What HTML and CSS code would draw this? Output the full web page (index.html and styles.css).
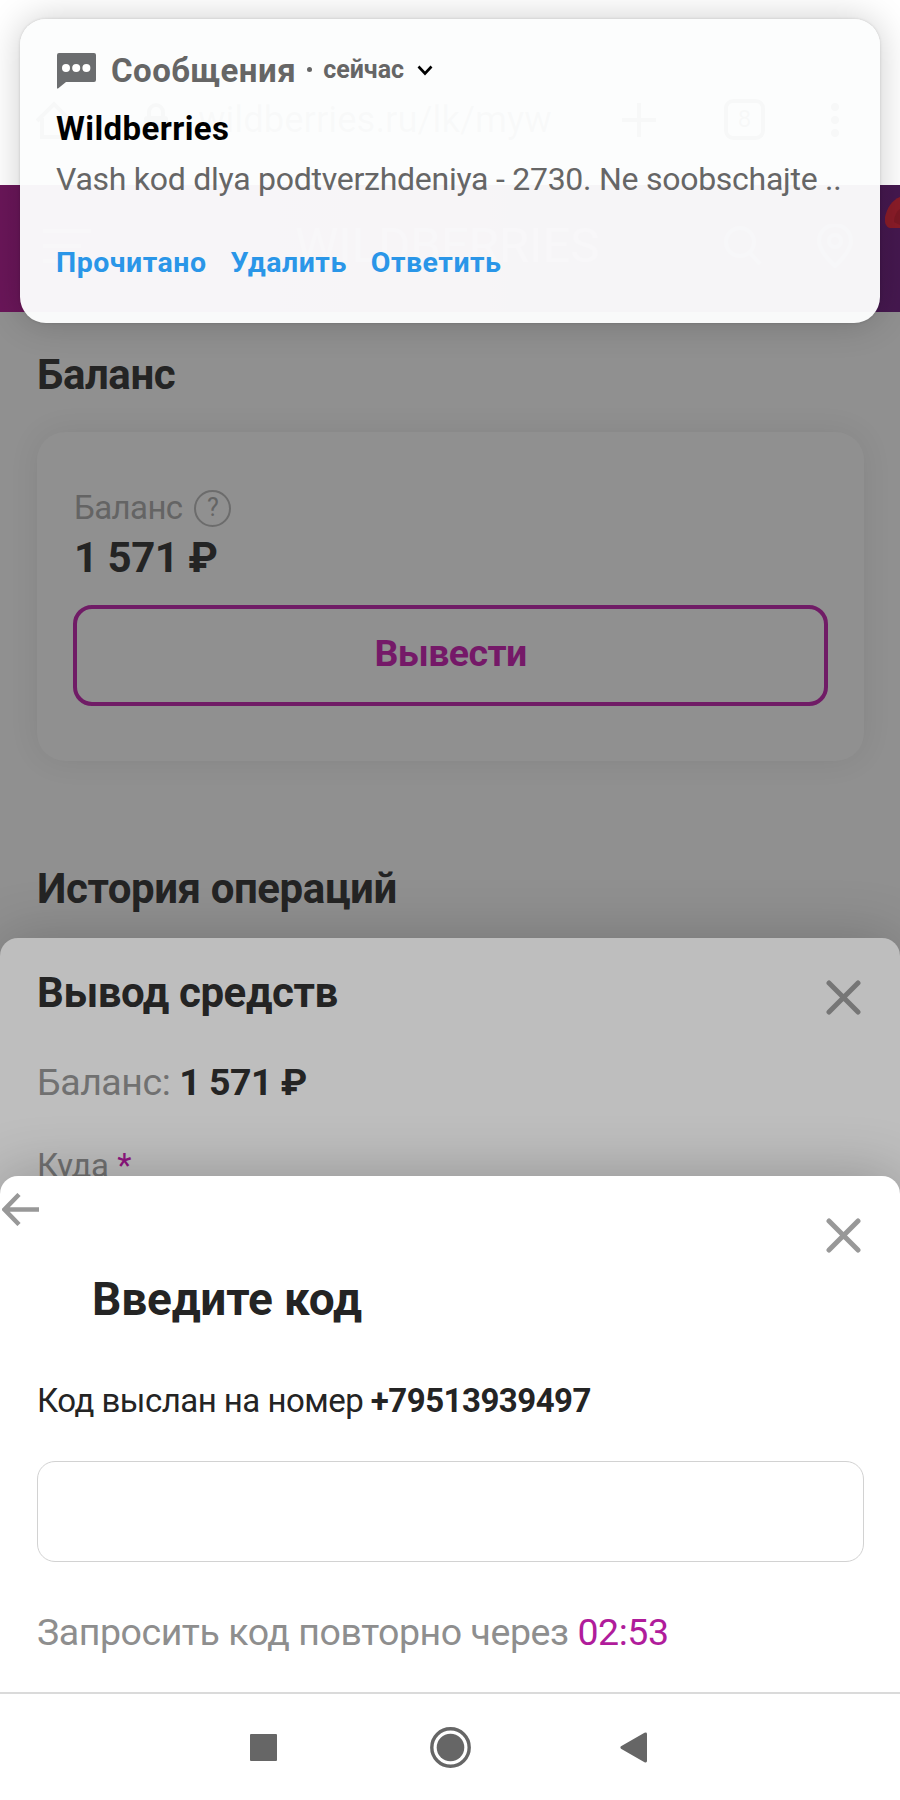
FILE: index.html
```html
<!DOCTYPE html>
<html lang="ru">
<head>
    <meta charset="UTF-8">
    <meta name="viewport" content="width=device-width, initial-scale=1.0">
    <title>Вывод средств</title>
    <link rel="stylesheet" href="styles.css">
</head>
<body>
    <div class="screen">
        <div class="browser-bar">
            <svg class="icon" width="40" height="40" viewBox="0 0 40 40"><path d="M3 21L20 4l17 17M8 18v19h24V18"/></svg>
            <svg class="lock" width="26" height="34" viewBox="0 0 26 34"><path d="M6 14V9a7 7 0 0 1 14 0v5" fill="none" stroke="#666" stroke-width="4"/><rect x="1" y="13" width="24" height="19" rx="3" fill="#666"/></svg>
            <span class="url">wildberries.ru/lk/myw</span>
            <svg class="icon plus" width="36" height="36" viewBox="0 0 36 36"><path d="M18 1v34M1 18h34"/></svg>
            <span class="tabs">8</span>
            <svg class="dots" width="12" height="36" viewBox="0 0 12 36"><circle cx="6" cy="5" r="4"/><circle cx="6" cy="18" r="4"/><circle cx="6" cy="31" r="4"/></svg>
        </div>

        <div class="shop-header">
            <svg class="icon light" width="48" height="36" viewBox="0 0 48 36"><path d="M0 3h48M0 18h38M0 33h48"/></svg>
            <span class="logo">WILDBERRIES</span>
            <svg class="icon light" width="38" height="40" viewBox="0 0 38 40"><circle cx="16" cy="16" r="14"/><path d="M26 27l10 11"/></svg>
            <svg class="icon light" width="38" height="44" viewBox="0 0 38 44"><path d="M19 42S3 28 3 17a16 16 0 0 1 32 0c0 11-16 25-16 25z"/><circle cx="19" cy="17" r="6"/></svg>
            <svg class="berry" width="15" height="32" viewBox="0 0 15 32"><path d="M15 0C7 3 2 11 0 20c-1 7 2 11 6 11h9z" fill="#8a1c28"/><path d="M15 12c-4 3-6 8-6 13l6 3z" fill="#7c1824"/></svg>
        </div>

        <div class="page">
            <h2>Баланс</h2>
            <div class="card">
                <div class="label">
                    <span>Баланс</span>
                    <span class="help">?</span>
                </div>
                <div class="amount">1 571 ₽</div>
                <button class="withdraw">Вывести</button>
            </div>
            <h2 class="history">История операций</h2>
        </div>

        <!-- Вывод средств -->
        <div class="sheet sheet-withdraw">
            <div class="sheet-head">
                <h2>Вывод средств</h2>
                <svg class="close" width="35" height="35" viewBox="0 0 35 35"><path d="M3 3l29 29M32 3L3 32"/></svg>
            </div>
            <p class="balance">Баланс: <b>1 571 ₽</b></p>
            <p class="where">Куда <span>*</span></p>
        </div>

        <!-- Код из SMS -->
        <div class="sheet sheet-code">
            <div class="code-head">
                <svg class="back" width="38" height="33" viewBox="0 0 38 33"><path d="M17 1.5L2.5 16.5 17 31.5M3 16.5h34"/></svg>
                <svg class="close" width="35" height="35" viewBox="0 0 35 35"><path d="M3 3l29 29M32 3L3 32"/></svg>
            </div>
            <h1>Введите код</h1>
            <p class="sent">Код выслан на номер <b>+79513939497</b></p>
            <input type="text" class="code">
            <p class="resend">Запросить код повторно через <span>02:53</span></p>
        </div>

        <div class="navbar">
            <svg width="27" height="27" viewBox="0 0 27 27"><rect width="27" height="27" rx="1"/></svg>
            <svg width="41" height="41" viewBox="0 0 41 41"><circle cx="20.5" cy="20.5" r="18.7" fill="none" stroke="#666" stroke-width="3.4"/><circle cx="20.5" cy="20.5" r="13.8"/></svg>
            <svg width="27" height="31" viewBox="0 0 27 31"><path d="M1 14.3L24.5.8Q27 0 27 2v27q0 2-2.500 1.200L1 16.700q-1.200-1.200 0-2.400z"/></svg>
        </div>

        <div class="notification">
            <div class="app">
                <svg width="39" height="36" viewBox="0 0 39 36"><path d="M2 0h35q2 0 2 2v25q0 2-2 2H9l-8 6.500q-1 .5-1-1V2q0-2 2-2z" fill="#6b6d6f"/><g fill="#fff"><circle cx="9" cy="15" r="4"/><circle cx="19.200" cy="15" r="4"/><circle cx="29.400" cy="15" r="4"/></g></svg>
                <span class="app-name">Сообщения</span>
                <span class="dot"></span>
                <span class="time">сейчас</span>
                <svg class="chevron" width="16" height="11" viewBox="0 0 16 11"><path d="M1.500 1.500L8 8.500l6.500-7" fill="none" stroke="#000" stroke-width="2.600"/></svg>
            </div>
            <div class="sender">Wildberries</div>
            <div class="message">Vash kod dlya podtverzhdeniya - 2730. Ne soobschajte ..</div>
            <div class="actions">
                <a>Прочитано</a>
                <a>Удалить</a>
                <a>Ответить</a>
            </div>
        </div>
    </div>
</body>
</html>
```
FILE: styles.css
```css
* {
    box-sizing: border-box;
}
body {
    margin: 0;
    font-family: Roboto, "Noto Sans", sans-serif;
    color: #242424;
}
h1, h2, p {
    margin: 0;
}
svg {
    display: block;
    flex: none;
}
.screen {
    position: relative;
    display: flex;
    flex-direction: column;
    width: 900px;
    height: 1800px;
    overflow: hidden;
    background-color: #fff;
}

/* browser and shop header, both under the notification */
.browser-bar {
    display: flex;
    align-items: center;
    height: 185px;
    padding: 54px 50px 0 34px;
    background-color: #fff;
}
.icon {
    fill: none;
    stroke: #666;
    stroke-width: 4;
}
.light {
    stroke: #fff;
    opacity: 0.2;
}
.lock {
    margin-left: 69px;
}
.url {
    width: 352px;
    margin-left: 29px;
    font-size: 36.5px;
    color: #888;
    white-space: nowrap;
}
.plus {
    margin-left: 71px;
}
.tabs {
    width: 41px;
    height: 41px;
    margin-left: 67px;
    border: 4px solid #666;
    border-radius: 9px;
    font-size: 24px;
    line-height: 33px;
    text-align: center;
    color: #666;
}
.dots {
    margin-left: auto;
    margin-right: 9px;
    fill: #666;
}
.shop-header {
    position: relative;
    display: flex;
    align-items: center;
    height: 127px;
    padding: 0 46px 6px 43px;
    background: linear-gradient(90deg, #6a1659, #45184f);
    gap: 54px;
}
.logo {
    margin-left: 150px;
    margin-right: auto;
    font-size: 49px;
    color: #fff;
    opacity: 0.2;
}
.berry {
    position: absolute;
    top: 12px;
    right: 0;
}

.page {
    flex: 1;
    padding: 38px 36px 0 37px;
    background-color: #909090;
}
h2 {
    font-size: 42px;
    line-height: 50px;
    font-weight: 700;
    letter-spacing: -0.42px;
}
.card {
    margin: 32px 0 0;
    height: 329px;
    padding: 57px 36px 0;
    border-radius: 28px;
    background-color: #909090;
    box-shadow: 0 0 30px rgba(0, 0, 0, 0.08);
}
.label {
    display: flex;
    align-items: center;
    gap: 12px;
    height: 38px;
    padding-left: 1px;
    font-size: 33px;
    line-height: 38px;
    letter-spacing: -0.6px;
    color: #646464;
}
.help {
    width: 37px;
    height: 37px;
    border: 2px solid #6c6c6c;
    border-radius: 50%;
    font-size: 25px;
    line-height: 32px;
    letter-spacing: 0;
    text-align: center;
}
.amount {
    margin-top: 6px;
    padding-left: 1px;
    font-size: 42px;
    line-height: 50px;
    font-weight: 700;
    letter-spacing: -0.5px;
}
.withdraw {
    display: block;
    width: 100%;
    height: 101px;
    margin-top: 22px;
    padding: 0 0 5px;
    border: 4px solid #701c66;
    border-radius: 19px;
    background: none;
    font-family: inherit;
    font-size: 37.5px;
    font-weight: 700;
    letter-spacing: -0.6px;
    color: #751968;
}
.history {
    margin-top: 103px;
}

/* bottom sheets */
.sheet {
    position: absolute;
    left: 0;
    right: 0;
    bottom: 108px;
    border-radius: 18px 18px 0 0;
}
.sheet-withdraw {
    top: 938px;
    padding: 30px 39px 0 37px;
    background-color: #bebebe;
    box-shadow: 0 0 60px rgba(0, 0, 0, 0.2);
}
.sheet-code {
    top: 1176px;
    background-color: #fff;
    box-shadow: 0 0 60px rgba(0, 0, 0, 0.24);
}
.sheet-head {
    display: flex;
    justify-content: space-between;
}
.close {
    margin-top: 12px;
    fill: none;
    stroke: #767676;
    stroke-width: 5;
    stroke-linecap: round;
}
.balance {
    margin-top: 42px;
    font-size: 37.5px;
    line-height: 44px;
    letter-spacing: -0.45px;
    color: #717171;
}
.balance b {
    letter-spacing: -0.5px;
    color: #242424;
}
.where {
    margin-top: 43px;
    font-size: 33px;
    line-height: 38px;
    letter-spacing: -0.4px;
    color: #717171;
}
.where span {
    margin-left: 1px;
    color: #8f1580;
}
.code-head {
    display: flex;
    justify-content: space-between;
    padding: 17px 39px 0 2px;
}
.code-head .close {
    margin-top: 25px;
    stroke: #989898;
}
.back {
    fill: none;
    stroke: #989898;
    stroke-width: 4.5;
}
h1 {
    margin: 19px 0 0 92px;
    font-size: 46px;
    line-height: 54px;
    font-weight: 700;
    letter-spacing: -0.15px;
}
.sent {
    margin: 56px 0 0 37px;
    font-size: 33px;
    line-height: 38px;
    letter-spacing: -0.52px;
}
.code {
    display: block;
    width: 827px;
    height: 101px;
    margin: 41px 0 0 37px;
    border: 1.5px solid #d2d2d2;
    border-radius: 18px;
    background-color: #fff;
}
.resend {
    margin: 48px 0 0 37px;
    font-size: 37.5px;
    line-height: 44px;
    letter-spacing: -0.45px;
    color: #8e8e8e;
}
.resend span {
    color: #b01c9b;
}

.navbar {
    position: relative;
    display: flex;
    align-items: center;
    height: 108px;
    padding-left: 250px;
    gap: 153px;
    border-top: 2px solid #dadada;
    background-color: #fff;
}
.navbar svg {
    fill: #666;
}
.navbar svg:last-child {
    margin-left: -4px;
}

.notification {
    position: absolute;
    top: 19px;
    left: 20px;
    width: 860px;
    height: 304px;
    padding: 34px 37px 0;
    border-radius: 26px;
    background-color: rgba(252, 253, 253, 0.968);
    box-shadow: 0 0 36px rgba(0, 0, 0, 0.2), 0 0 3px rgba(0, 0, 0, 0.15);
}
.app {
    display: flex;
    height: 38px;
    color: #666;
}
.app-name {
    margin-left: 15px;
    font-size: 33px;
    line-height: 36px;
    font-weight: 700;
    letter-spacing: 0.5px;
}
.dot {
    width: 5px;
    height: 5px;
    margin: 14px 11px 0 11px;
    border-radius: 50%;
    background-color: #666;
}
.time {
    font-size: 25px;
    line-height: 33px;
    font-weight: 700;
}
.chevron {
    margin: 12px 0 0 13px;
}
.sender {
    margin: 19px 0 0 -1px;
    font-size: 33px;
    line-height: 38px;
    font-weight: 700;
    letter-spacing: 0.4px;
    color: #000;
}
.message {
    margin: 12px 0 0 -1px;
    font-size: 32px;
    line-height: 38px;
    letter-spacing: -0.26px;
    color: #666;
    white-space: nowrap;
}
.actions {
    display: flex;
    gap: 24px;
    margin: 48px 0 0 -1px;
    font-size: 28.5px;
    line-height: 34px;
    font-weight: 700;
    letter-spacing: 0.5px;
    color: #2a96e8;
}
```
